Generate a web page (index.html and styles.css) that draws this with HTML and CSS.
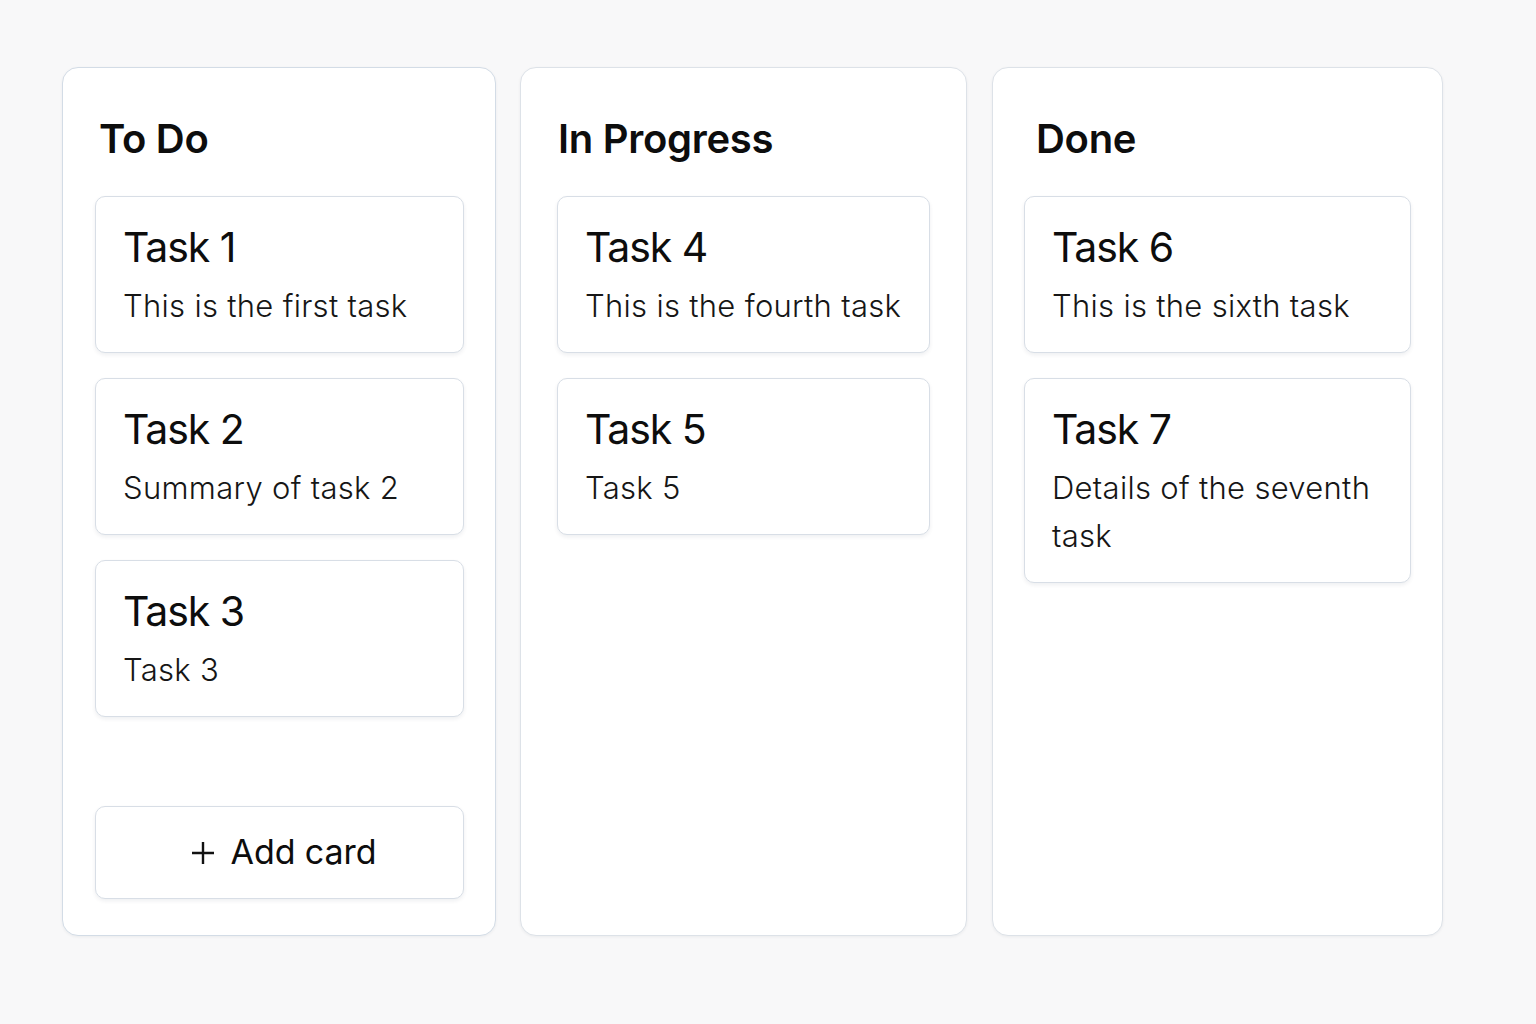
FILE: index.html
```html
<!DOCTYPE html>
<html lang="en">
<head>
<meta charset="utf-8">
<title>Board</title>
<link rel="stylesheet" href="styles.css">
</head>
<body>
<main class="board">
  <section class="column col-todo">
    <h2 class="column-title">To Do</h2>
    <div class="card-list">
      <article class="card"><h3 class="card-title">Task 1</h3><p class="card-desc">This is the first task</p></article>
      <article class="card"><h3 class="card-title">Task 2</h3><p class="card-desc">Summary of task 2</p></article>
      <article class="card"><h3 class="card-title">Task 3</h3><p class="card-desc">Task 3</p></article>
    </div>
    <button class="add-card"><svg class="plus" width="24" height="24" viewBox="0 0 24 24" aria-hidden="true"><path d="M12 1v22M1 12h22" stroke="#111" stroke-width="2.4" fill="none"/></svg><span>Add card</span></button>
  </section>
  <section class="column col-progress">
    <h2 class="column-title">In Progress</h2>
    <div class="card-list">
      <article class="card"><h3 class="card-title">Task 4</h3><p class="card-desc">This is the fourth task</p></article>
      <article class="card"><h3 class="card-title">Task 5</h3><p class="card-desc">Task 5</p></article>
    </div>
  </section>
  <section class="column col-done">
    <h2 class="column-title">Done</h2>
    <div class="card-list">
      <article class="card"><h3 class="card-title">Task 6</h3><p class="card-desc">This is the sixth task</p></article>
      <article class="card"><h3 class="card-title">Task 7</h3><p class="card-desc">Details of the seventh task</p></article>
    </div>
  </section>
</main>
</body>
</html>
```
FILE: styles.css
```css
* { box-sizing: border-box; }
html, body { margin: 0; padding: 0; }
body {
  background: #f8f8f9;
  font-family: Inter, "Noto Sans", "Liberation Sans", sans-serif;
  color: #111;
  width: 1536px;
  height: 1024px;
  overflow: hidden;
}
.board {
  display: flex;
  gap: 24px;
  padding: 67px 0 0 62px;
  height: 936px;
}
.column {
  background: #fff;
  border: 1px solid #dde2e8;
  border-radius: 16px;
  box-shadow: 0 1px 3px rgba(20, 30, 50, 0.06);
  display: flex;
  flex-direction: column;
  padding: 47px 31px 36px 32px;
  height: 869px;
}
.col-todo { width: 434px; border-color: #d3dce6; }
.col-progress { width: 447px; padding-left: 36px; padding-right: 36px; }
.col-done { width: 451px; margin-left: 1px; padding-left: 31px; padding-right: 31px; }
.column-title {
  margin: 0 0 33px 0;
  font-size: 40px;
  line-height: 48px;
  font-weight: 600;
  letter-spacing: -0.3px;
  padding-left: 4px;
  color: #0d0d0d;
}
.col-progress .column-title { padding-left: 1px; }
.col-done .column-title { padding-left: 12px; }
.card-list {
  display: flex;
  flex-direction: column;
  gap: 25px;
}
.card {
  background: #fff;
  border: 1px solid #d8dee6;
  border-radius: 10px;
  box-shadow: 0 2px 4px rgba(20, 30, 50, 0.07);
  padding: 26px 14px 22px 27px;
}
.card-title {
  margin: 0 0 11px 0;
  font-size: 41px;
  line-height: 48px;
  font-weight: 400;
  letter-spacing: -1.1px;
  color: #0d0d0d;
}
.card-desc {
  margin: 0;
  font-size: 31px;
  line-height: 48px;
  font-weight: 300;
  letter-spacing: 0.3px;
  color: #161616;
}
.col-done .card-desc { padding-right: 14px; }
.add-card {
  margin-top: auto;
  height: 93px;
  background: #fff;
  border: 1px solid #d8dee6;
  border-radius: 10px;
  box-shadow: 0 2px 4px rgba(20, 30, 50, 0.07);
  font-family: inherit;
  font-size: 34px;
  font-weight: 400;
  letter-spacing: -0.1px;
  color: #0d0d0d;
  cursor: pointer;
  padding: 0 0 2px 8px;
  display: flex;
  align-items: center;
  justify-content: center;
  gap: 16px;
}
.plus { display: block; margin-top: 2px; }
```
